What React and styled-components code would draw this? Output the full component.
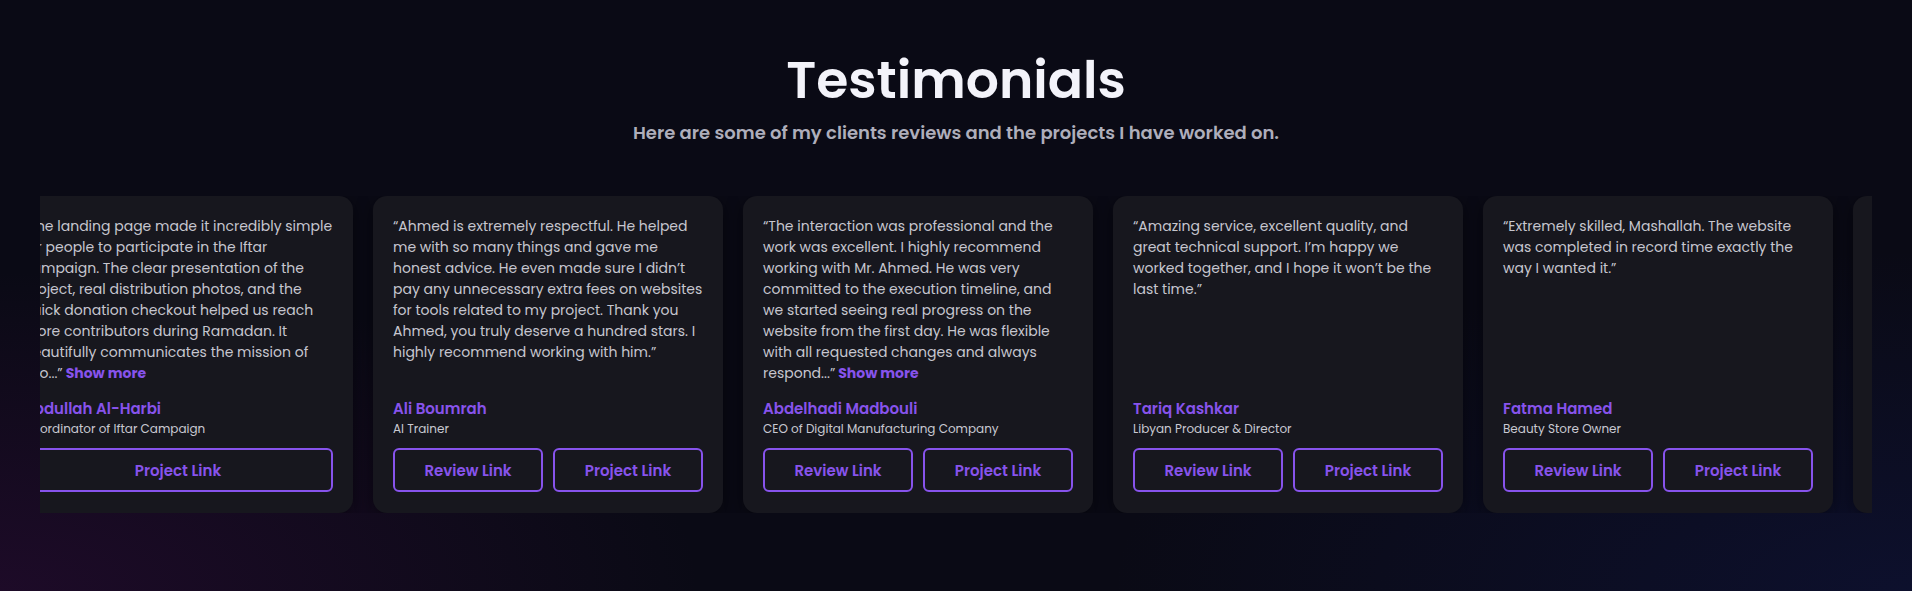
import React from "react";
import styled, { createGlobalStyle } from "styled-components";

const GlobalStyle = createGlobalStyle`
  * {
    box-sizing: border-box;
  }
  body {
    margin: 0;
    background: #0a0a15;
    font-family: "Poppins", "Open Sans", sans-serif;
  }
`;

const testimonials = [
  {
    text: "“The landing page made it incredibly simple for people to participate in the Iftar campaign. The clear presentation of the project, real distribution photos, and the quick donation checkout helped us reach more contributors during Ramadan. It beautifully communicates the mission of two...”",
    more: true,
    name: "Abdullah Al-Harbi",
    role: "Coordinator of Iftar Campaign",
    review: false,
  },
  {
    text: "“Ahmed is extremely respectful. He helped me with so many things and gave me honest advice. He even made sure I didn’t pay any unnecessary extra fees on websites for tools related to my project. Thank you Ahmed, you truly deserve a hundred stars. I highly recommend working with him.”",
    more: false,
    name: "Ali Boumrah",
    role: "AI Trainer",
    review: true,
  },
  {
    text: "“The interaction was professional and the work was excellent. I highly recommend working with Mr. Ahmed. He was very committed to the execution timeline, and we started seeing real progress on the website from the first day. He was flexible with all requested changes and always respond...”",
    more: true,
    name: "Abdelhadi Madbouli",
    role: "CEO of Digital Manufacturing Company",
    review: true,
  },
  {
    text: "“Amazing service, excellent quality, and great technical support. I’m happy we worked together, and I hope it won’t be the last time.”",
    more: false,
    name: "Tariq Kashkar",
    role: "Libyan Producer & Director",
    review: true,
  },
  {
    text: "“Extremely skilled, Mashallah. The website was completed in record time exactly the way I wanted it.”",
    more: false,
    name: "Fatma Hamed",
    role: "Beauty Store Owner",
    review: true,
  },
];

const App = () => {
  const items = [...testimonials, testimonials[0]];

  return (
    <Section>
      <GlobalStyle />
      <Title>Testimonials</Title>
      <SubTitle>
        Here are some of my clients reviews and the projects I have worked on.
      </SubTitle>
      <Viewport>
        <Track>
          {items.map((item, index) => (
            <Card key={index}>
              <Quote>
                {item.text}
                {item.more && <ShowMore> Show more</ShowMore>}
              </Quote>
              <Name>{item.name}</Name>
              <Role>{item.role}</Role>
              <Links>
                {item.review && <LinkButton href="#">Review Link</LinkButton>}
                <LinkButton href="#">Project Link</LinkButton>
              </Links>
            </Card>
          ))}
        </Track>
      </Viewport>
    </Section>
  );
};

const Section = styled.section`
  width: 100%;
  height: 591px;
  overflow: hidden;
  padding-top: 49px;
  display: flex;
  flex-direction: column;
  align-items: center;
  background:
    radial-gradient(ellipse 700px 320px at 0% 100%, rgba(70, 12, 80, 0.32), rgba(70, 12, 80, 0) 100%),
    radial-gradient(ellipse 800px 340px at 100% 100%, rgba(20, 30, 100, 0.3), rgba(20, 30, 100, 0) 100%),
    #0a0a15;
`;

const Title = styled.h2`
  margin: 0;
  color: #f3f3fa;
  font-size: 52px;
  font-weight: 600;
  line-height: 62px;
`;

const SubTitle = styled.p`
  margin: 9px 0 0;
  color: #aeaebb;
  font-size: 18px;
  font-weight: 600;
  line-height: 26px;
`;

const Viewport = styled.div`
  align-self: stretch;
  margin: 50px 40px 0;
  overflow: hidden;
`;

const Track = styled.div`
  display: flex;
  gap: 20px;
  transform: translateX(-37px);
`;

const Card = styled.div`
  flex: 0 0 350px;
  height: 317px;
  padding: 20px 20px 21px;
  display: flex;
  flex-direction: column;
  background: #17171e;
  border-radius: 14px;
  box-shadow: 0 4px 18px rgba(0, 0, 0, 0.45);
`;

const Quote = styled.p`
  flex: 1;
  margin: 0;
  color: #c6c6cf;
  font-size: 14px;
  line-height: 21px;
`;

const ShowMore = styled.span`
  color: #8753ec;
  font-weight: 700;
  cursor: pointer;
`;

const Name = styled.div`
  color: #8753ec;
  font-size: 15px;
  font-weight: 600;
  line-height: 22px;
`;

const Role = styled.div`
  color: #c9c9d2;
  font-size: 12px;
  line-height: 18px;
`;

const Links = styled.div`
  display: flex;
  gap: 10px;
  margin-top: 10px;
`;

const LinkButton = styled.a`
  flex: 1;
  height: 44px;
  display: flex;
  align-items: center;
  justify-content: center;
  border: 2px solid #8753ec;
  border-radius: 6px;
  color: #8753ec;
  font-size: 15px;
  font-weight: 600;
  text-decoration: none;
`;

export default App;
